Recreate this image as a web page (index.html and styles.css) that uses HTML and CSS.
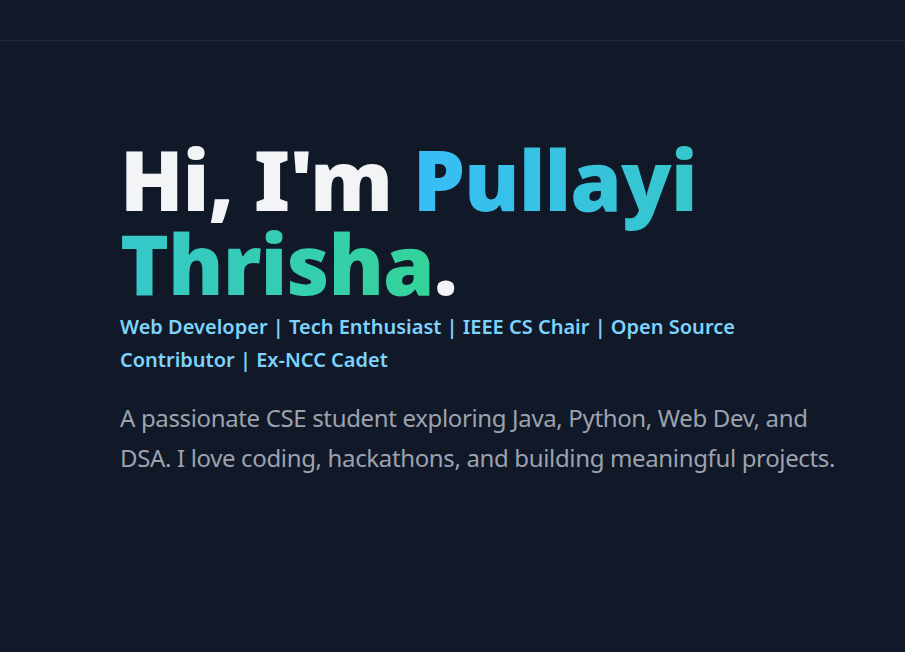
FILE: index.html
```html
<!DOCTYPE html>
<html lang="en">
<head>
<meta charset="utf-8">
<title>Pullayi Thrisha</title>
<link rel="stylesheet" href="styles.css">
</head>
<body>
<header class="topbar"></header>
<main class="hero">
  <div class="hero-inner">
    <h1 class="title">Hi, I'm <span class="grad">Pullayi Thrisha</span>.</h1>
    <p class="roles">Web Developer | Tech Enthusiast | IEEE CS Chair | Open Source Contributor | Ex-NCC Cadet</p>
    <p class="intro">A passionate CSE student exploring Java, Python, Web Dev, and DSA. I love coding, hackathons, and building meaningful projects.</p>
  </div>
</main>
</body>
</html>
```
FILE: styles.css
```css
* { box-sizing: border-box; }
html, body {
  margin: 0;
  padding: 0;
  background: #111827;
  height: 100%;
}
body {
  font-family: "Segoe UI", "Noto Sans", "Open Sans", sans-serif;
  color: #f3f4f6;
}
.topbar {
  height: 41px;
  border-bottom: 1px solid #1f2937;
}
.hero {
  padding: 96px 0 0 120px;
}
.hero-inner {
  max-width: 740px;
}
.title {
  margin: 0;
  font-size: 83px;
  line-height: 84px;
  font-weight: 900;
  letter-spacing: -1px;
  color: #f3f4f6;
}
.grad {
  background: linear-gradient(90deg, #38bdf8, #34d399);
  -webkit-background-clip: text;
  background-clip: text;
  color: transparent;
}
.roles {
  max-width: 700px;
  margin: 6px 0 0;
  font-size: 20px;
  line-height: 32.5px;
  font-weight: 600;
  color: #7dd3fc;
}
.intro {
  margin: 22px 0 0;
  font-size: 24px;
  line-height: 40px;
  font-weight: 400;
  letter-spacing: -0.35px;
  color: #9ca3af;
}
```
